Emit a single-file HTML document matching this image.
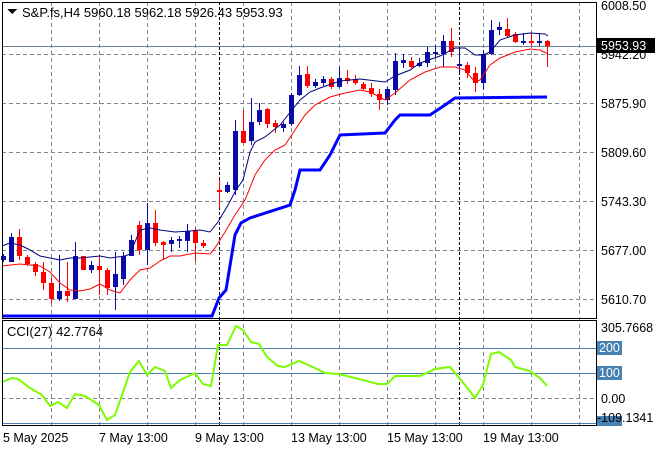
<!DOCTYPE html>
<html><head><meta charset="utf-8"><style>
body{margin:0;background:#fff;width:660px;height:450px;overflow:hidden;font-family:"Liberation Sans",sans-serif}
svg text{font-family:"Liberation Sans",sans-serif;font-size:12.5px;fill:#000}
svg text.t{font-size:13px}
</style></head><body>
<svg id="s" width="660" height="450" xmlns="http://www.w3.org/2000/svg" shape-rendering="crispEdges">
<g id="grid" stroke="#7c8590" stroke-dasharray="4,3" stroke-width="1"></g>
<line x1="219.5" y1="2" x2="219.5" y2="425" stroke="#000" stroke-dasharray="3,2"/>
<line x1="459.5" y1="2" x2="459.5" y2="425" stroke="#000" stroke-dasharray="3,2"/>
<line x1="2" y1="46.5" x2="597" y2="46.5" stroke="#6e7f90"/>
<g stroke="#4a7fb0"><line x1="2" y1="348.5" x2="597" y2="348.5"/><line x1="2" y1="373.5" x2="597" y2="373.5"/><line x1="2" y1="423.5" x2="597" y2="423.5"/></g>
<g id="c"></g>
<polyline fill="none" stroke="#000080" stroke-width="1" shape-rendering="auto" points="2,246 10,243 20,245 30,250 40,256 50,258 60,260 70,258 80,258 90,257 100,256 110,258 125,256 130,254 140,230 150,228 160,230 175,232 190,231 200,230 210,232 218,222 228,205 236,190 243,180 250,152 255,142 265,137 280,125 292,110 300,100 310,92 320,88 340,81 360,79 385,82 395,76 410,70 420,63 440,56 455,48 465,48 475,55 483,55 490,52 500,40 515,35 530,33 545,34 548,36"/>
<polyline fill="none" stroke="#ff0000" stroke-width="1" shape-rendering="auto" points="2,266 20,264 30,265 40,266 50,272 60,283 70,290 80,291 90,289 100,284 110,290 120,293 130,280 140,270 150,268 160,261 170,256 180,256 195,253 210,254 215,248 225,232 235,215 245,200 255,175 265,160 275,150 285,145 295,130 305,115 315,105 330,97 345,93 360,90 370,92 385,100 395,93 410,80 425,72 440,67 455,67 465,70 475,82 480,80 490,65 500,58 515,52 530,49 540,50 548,54"/>
<polyline fill="none" stroke="#0000ff" stroke-width="3" shape-rendering="auto" points="2,316 212,316 219,298 226,290 235,235 241,223 250,218 290,205 295,190 300,170 320,170 330,155 340,135 385,133 395,120 400,115 430,115 445,105 455,98 547,97"/>
<polyline fill="none" stroke="#7cfc00" stroke-width="2" shape-rendering="auto" points="2,382 12,378 18,379 30,388 42,395 50,406 58,402 67,408 75,394 85,396 99,405 107,420 115,415 130,372 139,361 147,375 155,367 165,371 171,388 180,380 195,373 203,384 211,386 218,345 227,345 236,326 243,330 251,342 259,344 267,357 278,366 285,367 299,361 315,368 325,373 339,374 355,378 378,384 387,384 395,376 420,376 435,369 450,367 465,385 475,398 483,385 491,354 499,352 511,360 515,367 530,371 540,378 547,386"/>
<rect x="2.5" y="2.5" width="594" height="316" fill="none" stroke="#000"/>
<rect x="2.5" y="320.5" width="594" height="105" fill="none" stroke="#000"/>
<path d="M7 9h10l-5 5z" fill="#000"/>
<text class="t" x="22" y="17">S&amp;P.fs,H4  5960.18 5962.18 5926.43 5953.93</text>
<text class="t" x="7" y="336">CCI(27) 42.7764</text>
<g id="lab"></g>
<rect x="597" y="38" width="58" height="15" fill="#000"/>
<text x="601" y="50" style="fill:#fff">5953.93</text>
<rect x="597" y="341" width="25" height="14" fill="#4682b4"/><text x="599" y="352" style="fill:#fff">200</text>
<rect x="597" y="366" width="25" height="14" fill="#4682b4"/><text x="599" y="377" style="fill:#fff">100</text>
<rect x="597" y="416" width="25" height="10" fill="#4682b4"/>
<text x="601" y="332">305.7668</text>
<text x="601" y="403">0.00</text>
<text x="597" y="422">-109.1341</text>
<g id="dates"></g>
</svg>
<script>
var ns="http://www.w3.org/2000/svg";
function el(p,t,a,txt){var e=document.createElementNS(ns,t);for(var k in a)e.setAttribute(k,a[k]);if(txt)e.textContent=txt;document.getElementById(p).appendChild(e);}
[51,99,147,195,243,291,339,387,435,483,531,579].forEach(function(x){el("grid","line",{x1:x+.5,y1:2,x2:x+.5,y2:425});});
[54,103,152,201,250,299].forEach(function(y){el("grid","line",{x1:2,y1:y+.5,x2:597,y2:y+.5});});
el("grid","line",{x1:2,y1:398.5,x2:597,y2:398.5});
var P=[["5942.20",54],["5875.90",103],["5809.60",152],["5743.30",201],["5677.00",250],["5610.70",299]];
P.forEach(function(p){el("lab","text",{x:601,y:p[1]+5},p[0]);});
el("lab","text",{x:601,y:10},"6008.50");
var D=[["5 May 2025",3],["7 May 13:00",99],["9 May 13:00",195],["13 May 13:00",291],["15 May 13:00",387],["19 May 13:00",483]];
D.forEach(function(d){el("dates","text",{x:d[1],y:442},d[0]);});
var C=[[3,260,256,254,262],[11,262,237,233,262],[19,237,256,229,260],[27,257,264,255,266],[35,264,272,262,276],[43,272,283,262,290],[51,283,299,278,303],[59,299,291,255,301],[67,291,296,262,302],[75,299,256,242,299],[83,256,270,256,270],[91,270,265,261,273],[99,266,270,255,295],[107,270,288,268,295],[115,287,274,252,310],[123,279,256,252,285],[131,256,240,235,255],[139,225,250,221,255],[147,250,223,203,265],[155,223,243,210,246],[163,242,245,241,260],[171,244,240,237,252],[179,240,239,236,248],[187,241,231,224,252],[195,231,243,228,261],[203,243,246,240,248],[219,190,192,180,208],[227,192,185,182,193],[235,190,131,120,195],[243,131,143,110,143],[251,141,122,98,145],[259,122,110,103,125],[267,109,124,108,128],[275,123,127,120,133],[283,128,124,122,132],[291,124,95,93,126],[299,95,75,66,96],[307,74,86,66,88],[315,86,82,79,88],[323,83,79,76,86],[331,79,87,77,89],[339,87,78,67,88],[347,78,81,70,84],[355,79,83,75,85],[363,84,89,82,90],[371,88,94,83,97],[379,94,100,89,110],[387,100,89,87,105],[395,90,61,53,95],[403,63,60,54,68],[411,61,67,57,68],[419,66,63,58,67],[427,63,52,47,67],[435,53,52,45,57],[443,54,41,35,67],[451,41,52,28,57],[459,66,64,50,73],[467,65,73,62,78],[475,73,83,67,92],[483,83,54,50,90],[491,54,30,20,55],[499,30,27,22,35],[507,29,36,18,38],[515,34,42,32,43],[523,42,41,33,45],[531,41,42,33,46],[539,43,41,33,46],[547,41,46,40,67]];
C.forEach(function(c){var up=c[2]<c[1];var col=up?"#0a0aa8":"#ff0000";
el("c","line",{x1:c[0]+.5,y1:c[3],x2:c[0]+.5,y2:c[4],stroke:col});
var t=Math.min(c[1],c[2]),h=Math.max(2,Math.abs(c[2]-c[1]));
el("c","rect",{x:c[0]-2,y:t,width:5,height:h,fill:col});});
</script>
</body></html>
